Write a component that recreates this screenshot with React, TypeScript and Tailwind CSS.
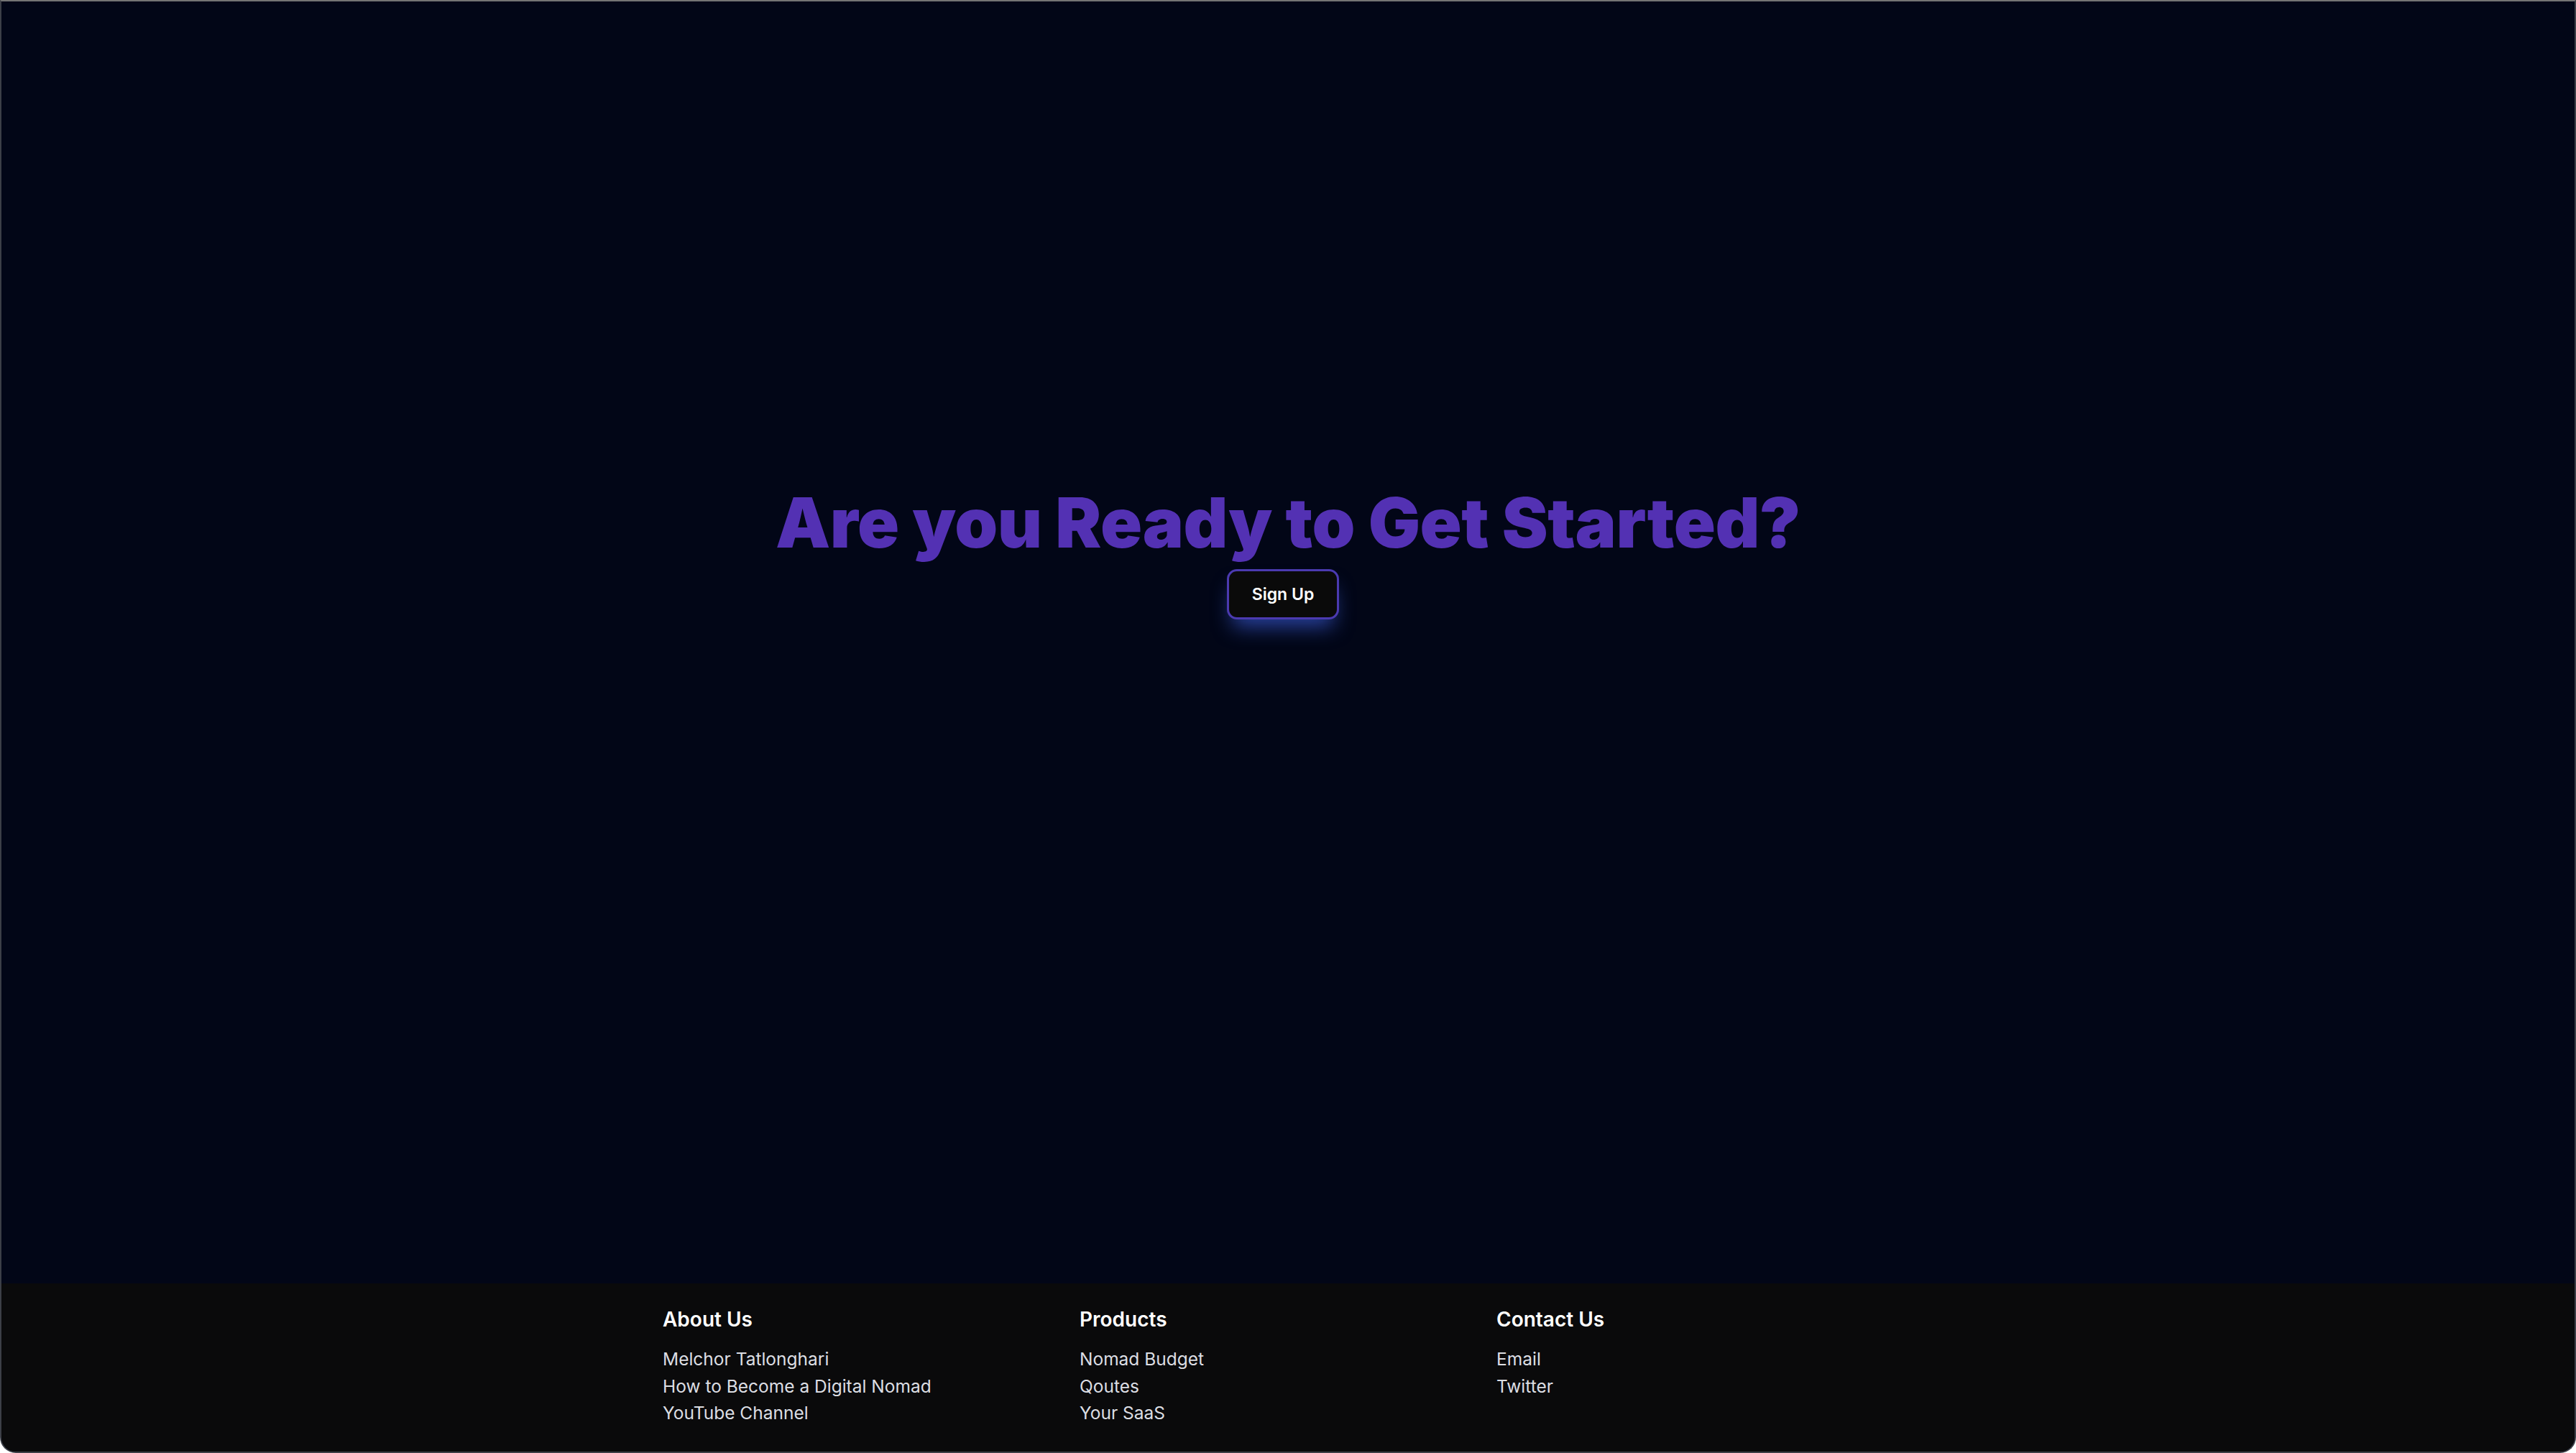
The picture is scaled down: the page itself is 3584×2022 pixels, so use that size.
import React from 'react';

const columns = [
  {
    title: 'About Us',
    links: ['Melchor Tatlonghari', 'How to Become a Digital Nomad', 'YouTube Channel']
  },
  {
    title: 'Products',
    links: ['Nomad Budget', 'Qoutes', 'Your SaaS']
  },
  {
    title: 'Contact Us',
    links: ['Email', 'Twitter']
  }
];

const Footer = () => {
  return (
    <footer className="h-[234px] bg-[#0a0a0b] pt-[30px]">
      <div className="mx-auto grid w-[1740px] grid-cols-3">
        {columns.map((col) => (
          <div key={col.title}>
            <h4 className="text-[28px] font-semibold leading-[40px] text-white">
              {col.title}
            </h4>
            <ul className="mt-[17px] flex flex-col">
              {col.links.map((link) => (
                <li key={link}>
                  <a href="#" className="text-[24.5px] leading-[37.7px] text-[#dcdee3]">
                    {link}
                  </a>
                </li>
              ))}
            </ul>
          </div>
        ))}
      </div>
    </footer>
  );
};

export default function App() {
  return (
    <div className="flex h-screen w-full flex-col overflow-hidden rounded-b-[22px] border-2 border-[#3c3f47] border-t-[#747474] bg-[#020617] font-['Inter',sans-serif]">
      <main className="flex flex-1 flex-col items-center pt-[677px]">
        <h1 className="text-[96px] font-black leading-none tracking-[-0.005em] text-[#5331b3]">
          Are you Ready to Get Started?
        </h1>
        <button className="mr-[14px] mt-[17px] rounded-[14px] border-[3px] border-[#4b3ab0] bg-[#0a0a0a] px-[32px] py-[12px] text-[23px] font-semibold leading-[40px] text-white shadow-[0_18px_28px_-8px_rgba(50,80,190,0.8)]">
          Sign Up
        </button>
      </main>
      <Footer />
    </div>
  );
}
